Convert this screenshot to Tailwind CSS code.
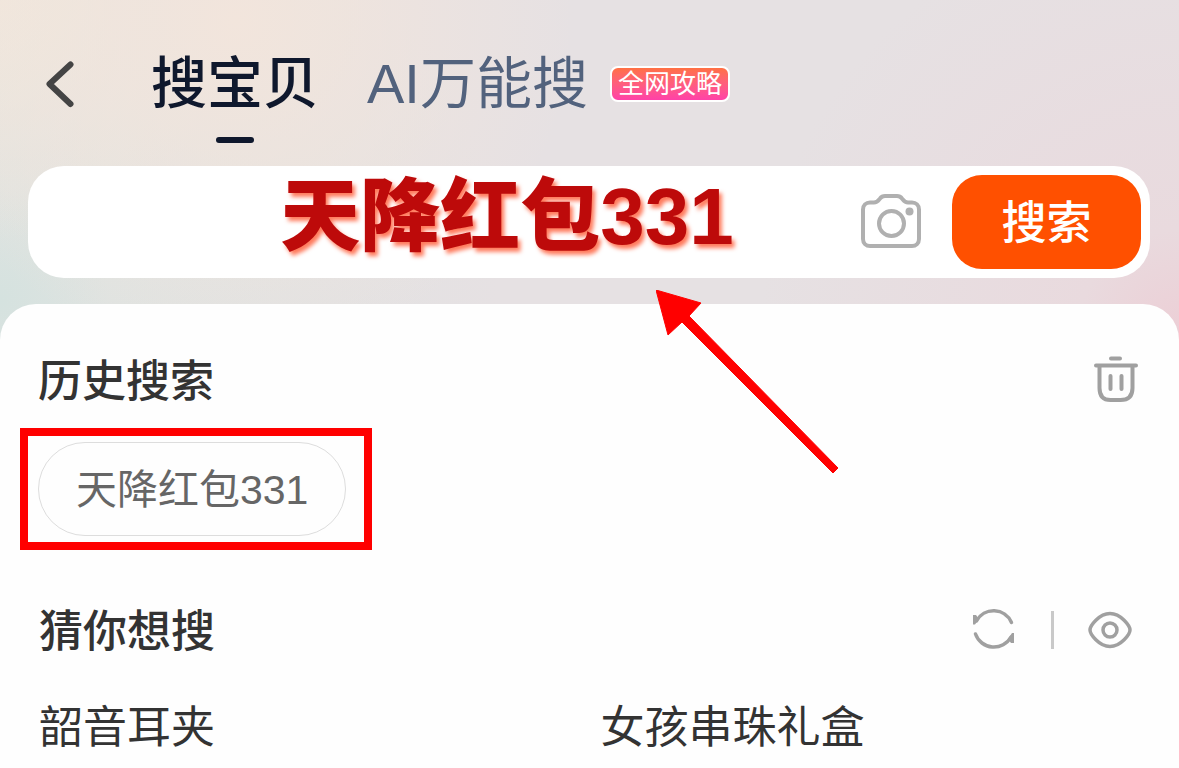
<!DOCTYPE html>
<html lang="zh-CN">
<head>
<meta charset="utf-8">
<meta name="viewport" content="width=device-width, initial-scale=1">
<title>搜索</title>
<script src="https://cdn.jsdelivr.net/npm/@tailwindcss/browser@4"></script>
</head>
<body class="min-h-screen bg-[#e6e1e3] font-['Liberation_Sans','Noto_Sans_CJK_SC',sans-serif] text-[#333333]">
<div class="relative flex min-h-screen flex-col overflow-hidden bg-[radial-gradient(circle_at_20%_20px,#f2e5dc_0,#f2e5dcb0_120px,#f2e5dc00_340px),radial-gradient(circle_at_0px_0px,#f0e7dc_0,#f0e7dc00_240px),radial-gradient(circle_at_0px_300px,#d5e2df_0,#dfe3e1_110px,#dfe3e100_500px),radial-gradient(circle_at_100%_330px,#eccfd6_0,#e9dade_100px,#e9dade00_420px)]">
  <header class="flex h-[166px] items-start pt-[46px] pl-[44px]">
    <button type="button" aria-label="返回" class="mt-[14px] h-[48px] w-[32px]">
      <svg viewBox="0 0 32 48" class="h-full w-full" fill="none" stroke="#444444" stroke-width="6" stroke-linecap="round" stroke-linejoin="round"><path d="M26.500 4.500 5.500 24l21 20"/></svg>
    </button>
    <nav class="flex items-start pl-[75px]">
      <a href="#" aria-current="page" class="flex flex-col items-center text-[56px] leading-[76px] font-medium text-[#0f182d]">搜宝贝<span class="mt-[15px] h-[6px] w-[38px] rounded-full bg-[#0f182d]"></span></a>
      <a href="#" class="ml-[48px] flex items-start text-[56px] leading-[76px] text-[#52627d]">AI万能搜<span class="mt-[20px] ml-[22px] rounded-lg border-2 border-white bg-linear-to-b from-[#ff7043] to-[#ff40a8] px-[6px] text-[26px] leading-[32px] text-white">全网攻略</span></a>
    </nav>
  </header>

  <form class="mr-[29px] ml-[28px] flex h-[112px] items-center rounded-[36px] bg-white pr-[9px]" onsubmit="return false">
    <input type="text" aria-label="搜索内容" value="天降红包331" class="h-[112px] min-w-0 flex-1 bg-transparent pb-[10px] pl-[126px] text-center text-[80px] font-black text-[#bd0a0a] outline-none [text-shadow:3px_4px_4px_#ff7a5c]">
    <button type="button" aria-label="拍照搜索" class="mr-[30px] h-[56px] w-[62px]">
      <svg viewBox="0 0 62 56" class="h-full w-full" fill="none" stroke="#b0b0b0" stroke-width="4"><path d="M10 8.500h4c3 0 4-1.500 6-4 1.500-2 3-2.500 5-2.500h12c2 0 3.500.5 5 2.500 2 2.500 3 4 6 4h4c4 0 7 3 7 7V45c0 4-3 7-7 7H10c-4 0-7-3-7-7V15.500c0-4 3-7 7-7Z"/><circle cx="31.500" cy="29.500" r="12.500"/><circle cx="49.500" cy="17.500" r="4" fill="#b0b0b0" stroke="none"/></svg>
    </button>
    <button type="submit" class="h-[94px] w-[189px] rounded-[30px] bg-[#ff5000] pt-[4px] text-[45px] font-medium text-white">搜索</button>
  </form>

  <main class="mt-[26px] flex-1 rounded-t-[36px] bg-[#fefefe] pt-[44px]">
    <section>
      <div class="flex h-[64px] items-center justify-between pr-[41px] pl-[38px]">
        <h2 class="pt-[4px] text-[44px] leading-[60px] font-medium">历史搜索</h2>
        <button type="button" aria-label="清空历史" class="h-[48px] w-[44px]">
          <svg viewBox="0 0 44 48" class="h-full w-full" fill="none" stroke="#a0a0a0" stroke-width="4" stroke-linecap="round"><path d="M17 2.500h9M2 9.500h40M5.500 10v22c0 8 4 12 11 12h10c8 0 12-4 12-12V10M16.500 20v13M27.500 20v13"/></svg>
        </button>
      </div>
      <div class="mt-[16px] ml-[20px] flex w-fit border-8 border-[#ff0000] py-[6px] pr-[18px] pl-[10px]">
        <button type="button" class="h-[94px] rounded-full border border-[#dddddd] px-[37px] pt-[4px] text-[41px] text-[#666666]">天降红包331</button>
      </div>
    </section>

    <section class="mt-[48px]">
      <div class="flex h-[64px] items-center justify-between pr-[47px] pl-[39px]">
        <h2 class="pt-[4px] text-[44px] leading-[60px] font-medium">猜你想搜</h2>
        <div class="flex items-center">
          <button type="button" aria-label="换一批" class="h-[44px] w-[42px]">
            <svg viewBox="0 0 42 44" class="h-full w-full" fill="none" stroke="#a0a0a0" stroke-width="3.500" stroke-linecap="round"><path d="M3.500 13A19.500 19.500 0 0 1 38.500 14.500M2.500 26A19.500 19.500 0 0 0 38 29"/><path d="M0 7h3l3 4-4 5.500H0ZM41 35h-3l-3-4 4-6h2Z" fill="#a0a0a0" stroke="none"/></svg>
          </button>
          <span class="ml-[36px] h-[38px] w-[3px] bg-[#c9c9c9]"></span>
          <button type="button" aria-label="隐藏推荐" class="ml-[34px] h-[38px] w-[44px]">
            <svg viewBox="0 0 44 38" class="h-full w-full" fill="none" stroke="#a0a0a0" stroke-width="3.500"><path d="M2 19C2 15 11 2.500 22 2.500S42 15 42 19 33 35.500 22 35.500 2 23 2 19Z"/><circle cx="22" cy="19" r="7"/></svg>
          </button>
        </div>
      </div>
      <ul class="mt-[34px] grid grid-cols-2 pr-[17px] pl-[39px] text-[44px] leading-[64px]">
        <li><a href="#">韶音耳夹</a></li>
        <li><a href="#">女孩串珠礼盒</a></li>
      </ul>
    </section>
  </main>

  <svg viewBox="0 0 184 184" class="pointer-events-none absolute top-[290px] left-[656px] h-[184px] w-[184px]" aria-hidden="true"><path d="M0 0 45 13 33 26 182 178 177 183 26 32 12 45Z" fill="#ff0000" stroke="#ff0000"/></svg>
</div>
</body>
</html>
